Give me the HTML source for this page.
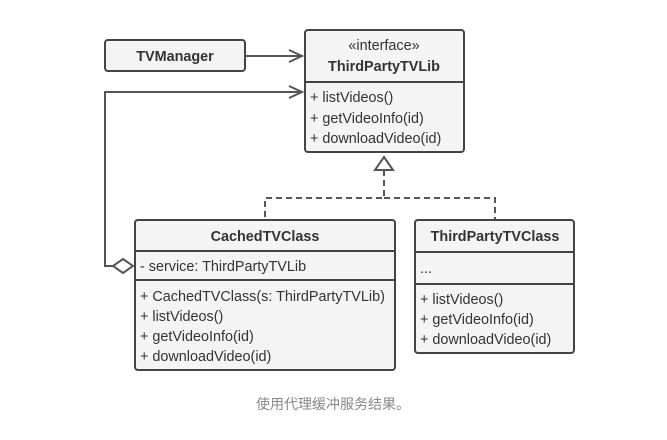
<!DOCTYPE html>
<html><head><meta charset="utf-8"><style>
body{margin:0;background:#fff;}
svg text{font-family:"Liberation Sans","Noto Sans CJK SC",sans-serif;font-size:14.4px;fill:#333;}
.b{font-weight:bold;}
</style></head><body>
<svg width="667" height="435" viewBox="0 0 667 435" xmlns="http://www.w3.org/2000/svg">
<g fill="#f4f4f4" stroke="#444" stroke-width="2">
<rect x="105" y="40" width="140" height="31" rx="3"/>
<rect x="305" y="30" width="159" height="122" rx="3"/>
<rect x="135" y="220" width="260" height="150" rx="3"/>
<rect x="415" y="220" width="159" height="133" rx="3"/>
</g>
<g stroke="#444" stroke-width="2" fill="none">
<line x1="305" y1="82" x2="464" y2="82"/>
<line x1="135" y1="251" x2="395" y2="251"/>
<line x1="135" y1="280" x2="395" y2="280"/>
<line x1="415" y1="252" x2="574" y2="252"/>
<line x1="415" y1="284" x2="574" y2="284"/>
</g>
<g stroke="#555" stroke-width="2" fill="none">
<line x1="245" y1="56" x2="302" y2="56"/>
<polyline points="289,50 302,56 289,62"/>
<polyline points="113,266 105,266 105,92 302,92"/>
<polyline points="289,86 302,92 289,98"/>
<polygon points="113,266 123,259 133,266 123,273" fill="#fff"/>
<polygon points="384,157 393,170 375,170" fill="#fff"/>
<g stroke-dasharray="6,4"><polyline points="384,170 384,198 265,198 265,219"/><polyline points="384,198 495,198 495,219"/></g>
</g>
<text x="175" y="61" text-anchor="middle" class="b">TVManager</text>
<text x="384" y="50" text-anchor="middle">«interface»</text>
<text x="384" y="71" text-anchor="middle" class="b">ThirdPartyTVLib</text>
<text x="310" y="102">+ listVideos()</text>
<text x="310" y="123">+ getVideoInfo(id)</text>
<text x="310" y="143">+ downloadVideo(id)</text>
<text x="265" y="241" text-anchor="middle" class="b">CachedTVClass</text>
<text x="140" y="271">- service: ThirdPartyTVLib</text>
<text x="140" y="301">+ CachedTVClass(s: ThirdPartyTVLib)</text>
<text x="140" y="321">+ listVideos()</text>
<text x="140" y="341">+ getVideoInfo(id)</text>
<text x="140" y="361">+ downloadVideo(id)</text>
<text x="495" y="241" text-anchor="middle" class="b">ThirdPartyTVClass</text>
<text x="420" y="273">...</text>
<text x="420" y="304">+ listVideos()</text>
<text x="420" y="324">+ getVideoInfo(id)</text>
<text x="420" y="344">+ downloadVideo(id)</text>
<text x="333" y="409" text-anchor="middle" style="fill:#888;font-size:14px">使用代理缓冲服务结果。</text>
</svg>
</body></html>
